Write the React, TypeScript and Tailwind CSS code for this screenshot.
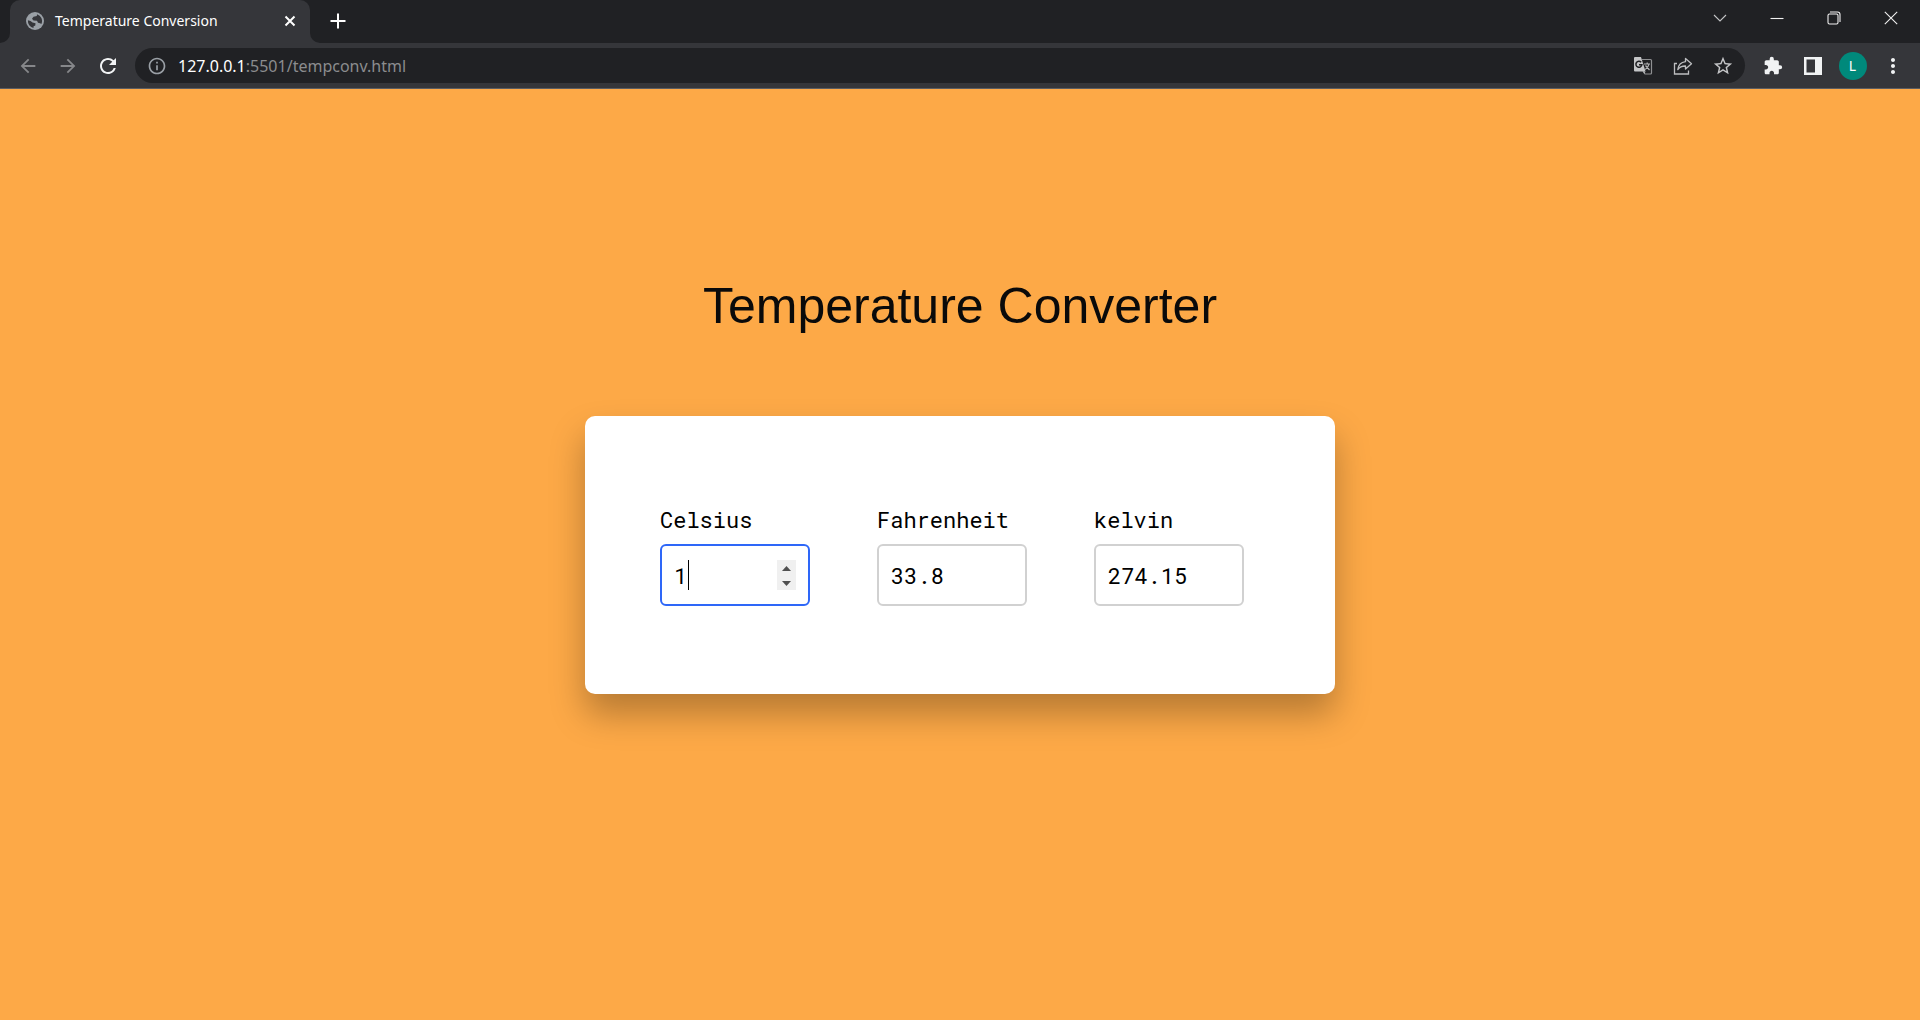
import { useState } from "react";
import type { ReactNode } from "react";
import { MdArrowBack, MdArrowForward, MdExtension, MdInfoOutline, MdMoreVert, MdRefresh, MdStarOutline } from "react-icons/md";

function GlobeIcon() {
  return (
    <svg viewBox="0 0 18 18" className="size-[18px] shrink-0" aria-hidden="true">
      <circle cx="9" cy="9" r="9" fill="#9aa0a6" />
      <path d="M11 2.200L10.800 4L7.500 4.800L6 6.800L7.500 8.500L11 8.800L12 10.800L14 11.200L15.400 12A7.200 7.200 0 0 0 11 2.200Z" fill="#35363a" />
      <path d="M1.900 8.300L4.500 9L6.500 10.600L9.500 11.200L9.300 13.500L7.600 14.300L7.500 16A7.200 7.200 0 0 1 1.900 8.300Z" fill="#35363a" />
    </svg>
  );
}

function TranslateIcon() {
  return (
    <svg viewBox="0 0 20 20" className="size-5" aria-hidden="true">
      <path d="M9 3.500H17.500Q18.500 3.500 18.500 4.500V17Q18.500 18 17.500 18H12L10 15" fill="none" stroke="#8f9092" strokeWidth="1.200" />
      <path d="M2 1H8L12.500 15.500H2Q1 15.500 1 14.500V2Q1 1 2 1Z" fill="#c4c5c7" />
      <path d="M8.200 6.300A3 3 0 1 0 8.900 8.700H6" fill="none" stroke="#202124" strokeWidth="1.500" />
      <path d="M11 8H17M14.200 6.600V8M16 8C15.500 10.500 14 12.500 12.200 13.600M12.500 9.500L16.500 14" fill="none" stroke="#b4b5b7" strokeWidth="1.200" />
      <path d="M10 15.500H12.500L11.300 18Z" fill="#b4b5b7" />
    </svg>
  );
}

function ShareIcon() {
  return (
    <svg viewBox="0 0 20 20" className="size-5" fill="none" stroke="#bdbec0" strokeWidth="1.300" aria-hidden="true">
      <path d="M4 7.500H1.500V18H15.500V14.500" />
      <path d="M12.500 2.500L18.500 7.800L12.500 13V10C8.800 9.900 6.600 11 4.800 13.600C5.300 9.400 8 6.300 12.500 5.700Z" strokeLinejoin="round" />
    </svg>
  );
}

function ToolButton({ label, children }: { label: string; children: ReactNode }) {
  return (
    <button type="button" aria-label={label} className="flex size-[35px] shrink-0 items-center justify-center rounded-full">
      {children}
    </button>
  );
}

function WindowButton({ label, children }: { label: string; children: ReactNode }) {
  return (
    <button type="button" aria-label={label} className="flex h-9 w-[57px] items-center justify-center">
      <svg viewBox="0 0 14 14" className="size-[14px]" fill="none" stroke="#f1f1f1" strokeWidth="1.100" aria-hidden="true">
        {children}
      </svg>
    </button>
  );
}

function TabStrip() {
  return (
    <div className="flex h-[43px] items-start bg-[#202124] pr-px pl-[10px]">
      <div className="relative flex h-[43px] w-[300px] items-center rounded-t-[10px] bg-[#35363a] pr-3 pb-0.5 pl-4">
        <svg viewBox="0 0 10 10" className="absolute bottom-0 -left-[10px] size-[10px]" aria-hidden="true">
          <path d="M10 0V10H0A10 10 0 0 0 10 0Z" fill="#35363a" />
        </svg>
        <svg viewBox="0 0 10 10" className="absolute -right-[10px] bottom-0 size-[10px]" aria-hidden="true">
          <path d="M0 0V10H10A10 10 0 0 1 0 0Z" fill="#35363a" />
        </svg>
        <GlobeIcon />
        <span className="ml-[11px] grow text-[14px] whitespace-nowrap text-white">Temperature Conversion</span>
        <button type="button" aria-label="Close tab" className="flex size-4 items-center justify-center">
          <svg viewBox="0 0 12 12" className="size-3" stroke="#fff" strokeWidth="2" aria-hidden="true">
            <path d="M1.500 1.500L10.500 10.500M10.500 1.500L1.500 10.500" />
          </svg>
        </button>
      </div>
      <button type="button" aria-label="New tab" className="ml-[10px] flex h-[42px] w-[35px] items-center justify-center">
        <svg viewBox="0 0 16 16" className="size-4" stroke="#fff" strokeWidth="2" aria-hidden="true">
          <path d="M8 0.500V15.500M0.500 8H15.500" />
        </svg>
      </button>
      <div className="ml-auto flex">
        <WindowButton label="Search tabs"><path d="M1 4L7 10L13 4" stroke="#c4c5c7" /></WindowButton>
        <WindowButton label="Minimize"><path d="M0.500 7.500H13.500" /></WindowButton>
        <WindowButton label="Restore">
          <rect x="1" y="3" width="10" height="10" rx="1.500" />
          <path d="M3 1H10.500Q13 1 13 3.500V11" />
        </WindowButton>
        <WindowButton label="Close"><path d="M0.800 0.800L13.200 13.200M13.200 0.800L0.800 13.200" /></WindowButton>
      </div>
    </div>
  );
}

function Toolbar() {
  return (
    <div className="flex h-[46px] items-start gap-[10px] border-b border-[#5c5d60] bg-[#35363a] px-[10px] pt-[5px]">
      <div className="flex gap-[5px]">
        <ToolButton label="Back"><MdArrowBack className="size-[22px] text-[#86878a]" /></ToolButton>
        <ToolButton label="Forward"><MdArrowForward className="size-[22px] text-[#86878a]" /></ToolButton>
        <ToolButton label="Reload"><MdRefresh className="size-6 text-[#f1f3f4]" /></ToolButton>
      </div>
      <div className="flex h-[35px] grow items-center rounded-full bg-[#202124] pr-[5px] pl-3">
        <MdInfoOutline className="size-5 shrink-0 text-[#9aa0a6]" />
        <a href="#" className="ml-[11px] grow text-[16px] whitespace-nowrap text-[#8b8c8e]">
          <span className="text-white">127.0.0.1</span>:5501/tempconv.html
        </a>
        <div className="flex gap-[5px]">
          <ToolButton label="Translate"><TranslateIcon /></ToolButton>
          <ToolButton label="Share"><ShareIcon /></ToolButton>
          <ToolButton label="Bookmark"><MdStarOutline className="size-[22px] text-[#c4c5c7]" /></ToolButton>
        </div>
      </div>
      <div className="flex gap-[5px]">
        <ToolButton label="Extensions"><MdExtension className="size-5 text-[#f1f3f4]" /></ToolButton>
        <ToolButton label="Side panel">
          <svg viewBox="0 0 18 18" className="size-[18px]" aria-hidden="true">
            <path d="M0 0H18V18H0ZM2.500 2.500V15.500H11V2.500Z" fill="#f1f3f4" fillRule="evenodd" />
          </svg>
        </ToolButton>
        <ToolButton label="Profile">
          <span className="flex size-7 items-center justify-center rounded-full bg-[#00897b] text-[14px] text-white">L</span>
        </ToolButton>
        <ToolButton label="Menu"><MdMoreVert className="size-6 text-[#f1f3f4]" /></ToolButton>
      </div>
    </div>
  );
}

type FieldProps = {
  id: string;
  label: string;
  value: string;
  active?: boolean;
  onChange: (value: number) => void;
};

function Field({ id, label, value, active = false, onChange }: FieldProps) {
  const step = (by: number) => onChange(Number(value) + by);
  return (
    <div className="flex w-[150px] flex-col gap-[10px]">
      <label htmlFor={id} className="leading-[28px]">{label}</label>
      <div className="relative">
        <input
          id={id}
          type="number"
          value={value}
          onChange={(e) => onChange(Number(e.target.value))}
          className={
            "h-[62px] w-full rounded-[6px] border-2 bg-white px-3 outline-none [appearance:textfield] [&::-webkit-inner-spin-button]:appearance-none " +
            (active ? "border-[#2e67f8] caret-transparent" : "border-[#d1d1d1]")
          }
        />
        {active && (
          <>
            <span className="absolute top-4 left-7 h-[30px] w-px bg-black" />
            <div className="absolute top-4 right-[14px] flex h-[30px] w-[19px] flex-col bg-[#f0f0f0]">
              <button type="button" aria-label="Increase" onClick={() => step(1)} className="flex h-1/2 items-center justify-center pt-0.5">
                <svg viewBox="0 0 9 5" className="h-[5px] w-[9px]" aria-hidden="true"><path d="M0 5L4.500 0L9 5Z" fill="#505050" /></svg>
              </button>
              <button type="button" aria-label="Decrease" onClick={() => step(-1)} className="flex h-1/2 items-center justify-center pt-0.5">
                <svg viewBox="0 0 9 5" className="h-[5px] w-[9px]" aria-hidden="true"><path d="M0 0L4.500 5L9 0Z" fill="#505050" /></svg>
              </button>
            </div>
          </>
        )}
      </div>
    </div>
  );
}

export default function App() {
  const [celsius, setCelsius] = useState(1);
  const show = (n: number) => String(Number(n.toFixed(2)));

  return (
    <div className="flex min-h-screen flex-col bg-[#fda947] font-['Noto_Sans',sans-serif]">
      <header>
        <TabStrip />
        <Toolbar />
      </header>
      <main className="flex grow flex-col items-center px-6 pt-[189px] pb-24">
        <h1 className="font-['Liberation_Sans',Arial,sans-serif] text-[50px] leading-[56px] text-[#0a0a0a]">Temperature Converter</h1>
        <form className="mt-[82px] flex w-full max-w-[750px] gap-[67px] rounded-[10px] bg-white px-[75px] pt-[90px] pb-[88px] font-['Roboto_Mono','DejaVu_Sans_Mono',monospace] text-[22px] text-black shadow-[0_20px_35px_rgba(0,0,0,0.28)]">
          <Field id="celsius" label="Celsius" value={show(celsius)} active onChange={setCelsius} />
          <Field id="fahrenheit" label="Fahrenheit" value={show((celsius * 9) / 5 + 32)} onChange={(f) => setCelsius(((f - 32) * 5) / 9)} />
          <Field id="kelvin" label="kelvin" value={show(celsius + 273.15)} onChange={(k) => setCelsius(k - 273.15)} />
        </form>
      </main>
    </div>
  );
}
